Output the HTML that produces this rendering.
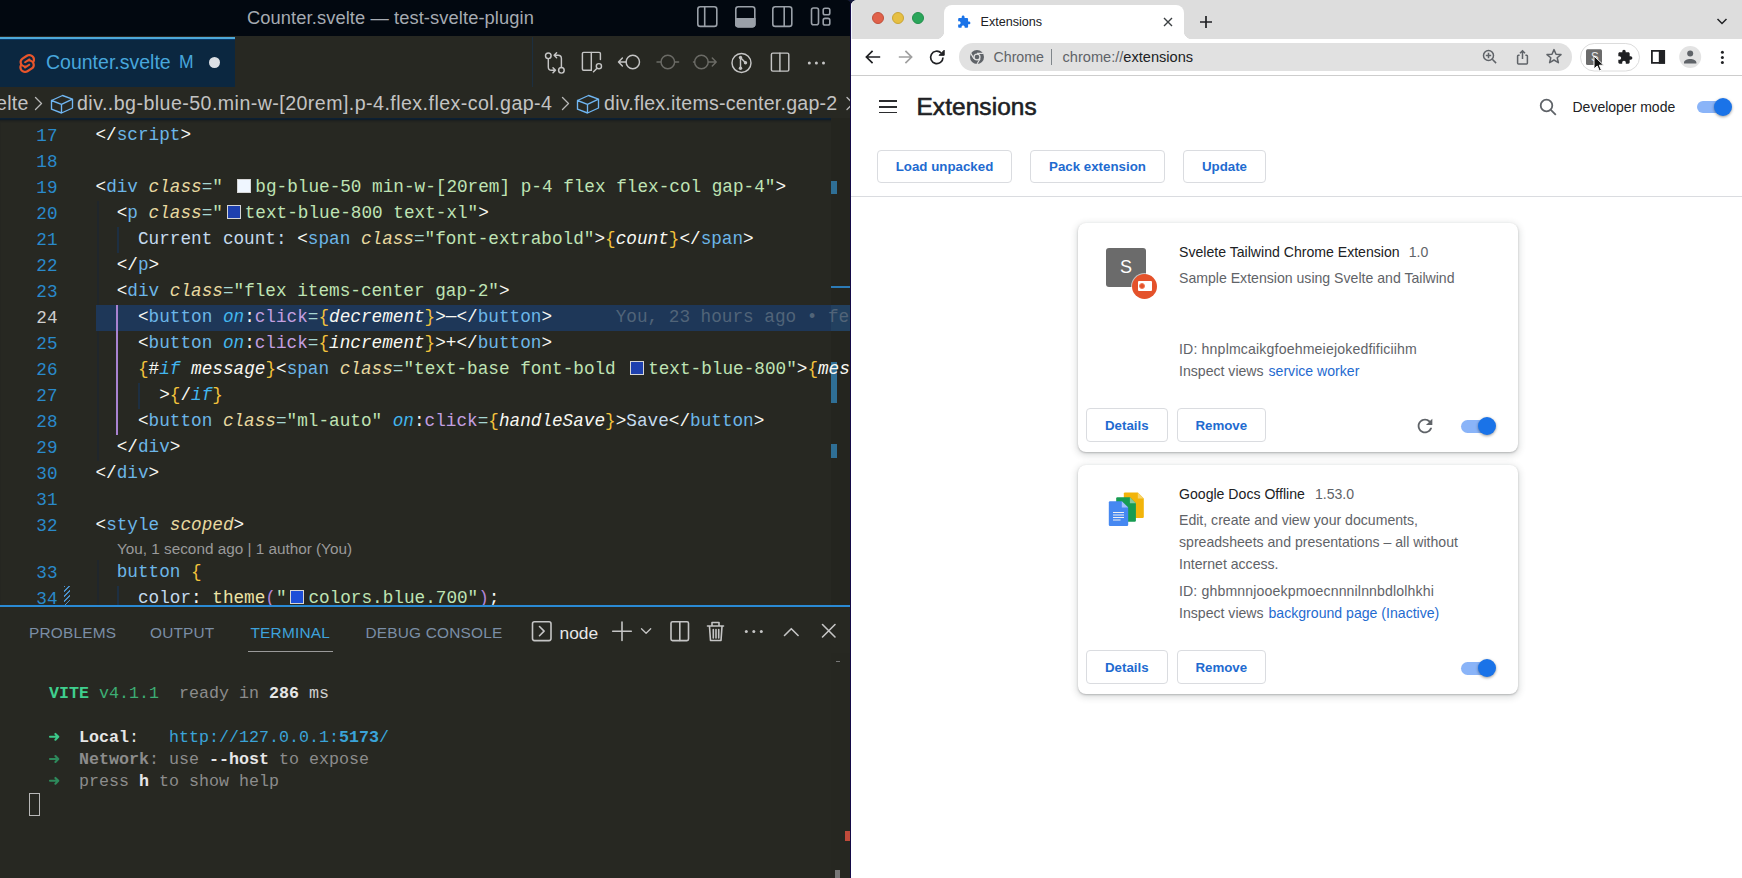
<!DOCTYPE html>
<html><head><meta charset="utf-8">
<style>
*{box-sizing:border-box}
html,body{margin:0;padding:0}
body{width:1742px;height:878px;overflow:hidden;position:relative;background:#141a3c;font-family:"Liberation Sans",sans-serif}
.abs{position:absolute}
#vs{position:absolute;left:0;top:0;width:851px;height:878px;background:#272822;overflow:hidden;border-top-right-radius:5px}
#title{position:absolute;left:0;top:0;width:851px;height:36px;background:#020810}
#title .t{position:absolute;left:247px;top:7px;font-size:18.3px;color:#a6abb2;white-space:nowrap;letter-spacing:0.1px}
#tabs{position:absolute;left:0;top:36px;width:851px;height:51px;background:#272822}
#tab{position:absolute;left:0;top:1px;width:235px;height:50px;background:#0b2740;border-top:2px solid #4ea8d8;box-shadow:inset 0 1px 0 #063868}
#crumbs{position:absolute;left:0;top:87px;width:851px;height:31px;background:#272822;overflow:hidden}
#editor{position:absolute;left:0;top:118px;width:851px;height:487px;background:#272822;overflow:hidden;box-shadow:inset 0 1.5px 0 #0b2035,inset 0 4px 3px -2px #0d141c}
#panel{position:absolute;left:0;top:605px;width:851px;height:273px;background:#272822;overflow:hidden}
.ptab{position:absolute;top:18.5px;font-size:15.4px;color:#7b8ea6;white-space:nowrap;letter-spacing:.2px}
.code{position:absolute;left:95.5px;font-family:"Liberation Mono",monospace;font-size:17.7px;line-height:26px;white-space:pre;color:#f8f8f2}
.ln{position:absolute;left:0;width:57.5px;font-family:"Liberation Mono",monospace;font-size:17.65px;line-height:26px;color:#2a8acb;text-align:right}
.ln.act{color:#d0d0d0}
.tg{color:#6cb6e8}.at{color:#e8d9a0;font-style:italic}.st{color:#bfe3b4}.eq{color:#a6d6d2}.br{color:#f2c23c}.it{font-style:italic;color:#f8f8f2}
.ob{color:#42b6ee;font-style:italic}.pu{color:#c39fe0}.tx{color:#c4daee}.pr{color:#b485d6}.fn{color:#ede3a6}
.bl{color:#516478}
.sw{display:inline-block;width:21.8px;height:14px;position:relative;vertical-align:-1px}
.sw i{position:absolute;left:3.8px;top:0;width:14px;height:14px;border:1px solid #d6d6d6}
.term{position:absolute;left:29px;font-family:"Liberation Mono",monospace;font-size:16.67px;line-height:22px;white-space:pre;color:#8c8c8c}
.b{font-weight:bold}
#chrome{position:absolute;left:851px;top:0;width:891px;height:878px;background:#fff;border-top-left-radius:6px;overflow:hidden}
.btn{position:absolute;height:33.5px;border:1px solid #dadce0;border-radius:4px;color:#1f6bd0;font-weight:bold;font-size:13.3px;text-align:center;line-height:31.5px;white-space:nowrap;background:#fff}
.card{position:absolute;left:226.5px;width:440px;background:#fff;border-radius:8px;box-shadow:0 1px 2px rgba(60,64,67,.3),0 2px 6px 2px rgba(60,64,67,.15)}
.ctx{position:absolute;left:328px;font-size:14.1px;color:#5f6368;white-space:nowrap;line-height:20px}
.tog{position:absolute;width:36px;height:14px}
.tog:before{content:"";position:absolute;left:0;top:0;width:34px;height:12.5px;border-radius:7px;background:#8ab4f8}
.tog:after{content:"";position:absolute;left:16.5px;top:-2.6px;width:18px;height:18px;border-radius:50%;background:#1a73e8;box-shadow:0 1px 3px rgba(0,0,0,.4)}
</style></head><body>
<div id="vs">
  <div class="abs" style="left:849.8px;top:0;width:1.2px;height:878px;background:#140a48;z-index:9"></div>
  <div id="title">
    <div class="t">Counter.svelte — test-svelte-plugin</div>
    <svg class="abs" style="left:690px;top:0" width="150" height="36" viewBox="0 0 150 36" fill="none" stroke="#9aa0a8" stroke-width="1.6">
      <rect x="7.8" y="6.8" width="19" height="19.6" rx="2.5"/><line x1="14.7" y1="7" x2="14.7" y2="26"/>
      <rect x="45.8" y="6.8" width="19" height="19.6" rx="2.5"/><path d="M45.8 18.8h19v5.6a2.5 2.5 0 0 1-2.5 2.5h-14a2.5 2.5 0 0 1-2.5-2.5z" fill="#9aa0a8"/>
      <rect x="82.8" y="6.8" width="19" height="19.6" rx="2.5"/><line x1="94.2" y1="7" x2="94.2" y2="26"/>
      <rect x="121.5" y="8" width="7" height="16.8" rx="2"/><rect x="133.2" y="8.2" width="6.6" height="6.6" rx="1.8"/><rect x="133.2" y="18.4" width="6.6" height="6.6" rx="1.8"/>
    </svg>
  </div>
  <div id="tabs">
    <div id="tab">
      <svg class="abs" style="left:18.8px;top:14.6px" width="16.4" height="19" viewBox="0 0 98.1 118">
        <path fill="#e8552b" d="M91.8 15.6C80.9-.1 59.2-4.7 43.6 5.2L16.1 22.8C8.6 27.5 3.4 35.2 1.9 43.9c-1.3 7.3-.2 14.8 3.3 21.3-2.4 3.6-4 7.6-4.7 11.8-1.6 8.9.5 18.1 5.7 25.4 11 15.7 32.6 20.3 48.2 10.4l27.5-17.5c7.5-4.7 12.7-12.4 14.2-21.1 1.3-7.3.2-14.8-3.3-21.3 2.4-3.6 4-7.6 4.7-11.8 1.7-9-.4-18.2-5.7-25.5z"/>
        <path fill="#0a2641" d="M40.9 103.9c-8.9 2.3-18.2-1.2-23.4-8.7-3.2-4.4-4.4-9.9-3.5-15.3.2-.9.4-1.7.6-2.6l.5-1.6 1.4 1c3.3 2.4 6.9 4.2 10.8 5.4l1 .3-.1 1c-.1 1.4.3 2.9 1.1 4.1 1.6 2.3 4.4 3.4 7.1 2.7.6-.2 1.2-.4 1.7-.7L65.5 72c1.4-.9 2.3-2.2 2.6-3.8.3-1.6-.1-3.3-1-4.6-1.6-2.3-4.4-3.3-7.1-2.6-.6.2-1.2.4-1.7.7l-10.5 6.7c-1.7 1.1-3.600 1.9-5.6 2.4-8.9 2.3-18.2-1.2-23.4-8.7-3.1-4.4-4.4-9.9-3.4-15.3.9-5.2 4.1-9.9 8.6-12.7l27.5-17.5c1.7-1.1 3.6-1.9 5.6-2.5 8.9-2.3 18.2 1.2 23.4 8.7 3.2 4.4 4.4 9.9 3.5 15.3-.2.9-.4 1.7-.7 2.6l-.5 1.6-1.4-1c-3.3-2.4-6.9-4.2-10.8-5.4l-1-.3.1-1c.1-1.4-.3-2.9-1.1-4.1-1.6-2.3-4.4-3.3-7.1-2.6-.6.2-1.2.4-1.7.7L32.4 46.1c-1.4.9-2.3 2.2-2.6 3.8s.1 3.3 1 4.6c1.6 2.3 4.4 3.3 7.1 2.6.6-.2 1.2-.4 1.7-.7l10.5-6.7c1.7-1.1 3.6-1.9 5.6-2.5 8.9-2.3 18.2 1.2 23.4 8.7 3.2 4.4 4.4 9.9 3.5 15.3-.9 5.2-4.1 9.9-8.6 12.7l-27.5 17.5c-1.7 1.1-3.6 1.9-5.6 2.5z"/>
      </svg>
      <div class="abs" style="left:46px;top:12px;font-size:19.5px;color:#47a6dc;white-space:nowrap">Counter.svelte</div>
      <div class="abs" style="left:179px;top:12px;font-size:19px;color:#47a6dc;transform:scaleX(.92);transform-origin:left">M</div>
      <div class="abs" style="left:208.5px;top:17.7px;width:11.7px;height:11.7px;border-radius:50%;background:#dcdfe4"></div>
    </div>
    <div class="abs" style="left:532px;top:1px;width:1px;height:50px;background:#1c2f40"></div>
    <svg class="abs" style="left:530px;top:-0.5px" width="321" height="51" viewBox="530 36 321 51" fill="none" stroke="#c5c5c5" stroke-width="1.45" stroke-linecap="round" stroke-linejoin="round">
      <!-- compare changes -->
      <circle cx="548.3" cy="55.8" r="2.8"/><path d="M548.3 58.6V67q0 3.3 3.3 3.3h3.9M553 67.8l2.5 2.5-2.5 2.5"/>
      <circle cx="561.4" cy="70.3" r="2.8"/><path d="M561.4 67.5V58.6q0-3.3-3.3-3.3h-4M556.6 52.8l-2.5 2.5 2.5 2.5"/>
      <!-- open changes -->
      <path d="M591.3 70.3h-7.7a1.2 1.2 0 0 1-1.2-1.2V53.6a1.2 1.2 0 0 1 1.2-1.2h15.6a1.2 1.2 0 0 1 1.2 1.2v5.9"/><line x1="591.3" y1="52.4" x2="591.3" y2="70.3"/>
      <circle cx="598.9" cy="66.2" r="2.6"/><line x1="597" y1="68.2" x2="593.5" y2="71.8"/>
      <!-- previous change -->
      <circle cx="632.8" cy="62" r="6.7"/><path d="M626.4 62h-7.8M622.4 58l-3.9 4 3.9 4"/>
      <!-- -O- dim -->
      <g stroke="#6b6b66"><circle cx="667.8" cy="62" r="6.8"/><path d="M657 62h4M674.6 62h4"/>
      <circle cx="701.4" cy="62" r="6.8"/><path d="M693.5 62h1.1M708.2 62h7.8M712.3 58l3.9 4-3.9 4"/></g>
      <!-- branch circle -->
      <circle cx="741.5" cy="62.9" r="9.5"/><g fill="#c5c5c5" stroke="none"><circle cx="740.5" cy="57.5" r="1.7"/><circle cx="740.5" cy="68.2" r="1.7"/><circle cx="745.5" cy="62.7" r="1.7"/></g><path d="M740.5 57.5v10.7M740.5 57.5l5 5.2"/>
      <!-- split -->
      <rect x="771.4" y="53.1" width="17.4" height="18" rx="1.4"/><line x1="779.9" y1="53.1" x2="779.9" y2="71.1"/>
      <!-- more -->
      <g fill="#c5c5c5" stroke="none"><circle cx="809.3" cy="62.9" r="1.5"/><circle cx="816.4" cy="62.9" r="1.5"/><circle cx="823.5" cy="62.9" r="1.5"/></g>
    </svg>
  </div>
  <div id="crumbs">
    <div class="abs" style="left:-4px;top:5px;font-size:19.6px;color:#c3c3c3;white-space:nowrap;letter-spacing:.3px">elte</div>
    <svg class="abs" style="left:0;top:0" width="851" height="31" viewBox="0 87 851 31" fill="none" stroke-linecap="round" stroke-linejoin="round">
      <path d="M35.5 97.5l6 6-6 6M562.5 97.5l6 6-6 6M847 97.5l6 6-6 6" stroke="#b8b8b8" stroke-width="1.3"/>
      <g stroke="#70b6f2" stroke-width="1.35">
        <path d="M51.5 100.5l11-5 10 3.6v8.9l-11 5-10-3.8z M51.5 100.5l10 3.8 11-5.2 M61.5 104.3v8.7"/>
        <path d="M577.5 100.5l11-5 10 3.6v8.9l-11 5-10-3.8z M577.5 100.5l10 3.8 11-5.2 M587.5 104.3v8.7"/>
      </g>
    </svg>
    <div class="abs" style="left:77px;top:5px;font-size:19.6px;color:#c3c3c3;white-space:nowrap;letter-spacing:0.45px">div..bg-blue-50.min-w-[20rem].p-4.flex.flex-col.gap-4</div>
    <div class="abs" style="left:604px;top:5px;font-size:19.6px;color:#c3c3c3;white-space:nowrap;letter-spacing:0.23px">div.flex.items-center.gap-2</div>
  </div>
  <div id="editor">
    <!-- guides -->
    <div class="abs" style="left:96.5px;top:83px;width:2px;height:260px;background:#20262b"></div><div class="abs" style="left:96.5px;top:442px;width:2px;height:45px;background:#20262b"></div>
    <div class="abs hl" style="left:96px;top:187px;width:755px;height:26px;background:#1e3758"></div>
    <div class="abs" style="left:116.5px;top:109px;width:2px;height:26px;background:#1d2f42"></div>
    <div class="abs" style="left:116.2px;top:187px;width:2px;height:130px;background:#a882d0"></div>
    <div class="abs" style="left:137.5px;top:265px;width:2px;height:26px;background:#1d2f42"></div>
    <div class="abs" style="left:116.5px;top:468px;width:2px;height:26px;background:#1d2f42"></div>
    <div class="abs" style="left:64px;top:468px;width:6px;height:19px;background:repeating-linear-gradient(135deg,#4a8fc8 0 1.2px,transparent 1.2px 3.4px)"></div>
    <!-- overview ruler -->
    <div class="abs" style="left:830.5px;top:0;width:1px;height:487px;background:#3b3c36"></div>
    <div class="abs" style="left:831px;top:0;width:20px;height:487px;background:#24251f"></div>
    <div class="abs" style="left:831px;top:63px;width:6px;height:13px;background:#2f6f95"></div>
    <div class="abs" style="left:831px;top:167.5px;width:20px;height:2px;background:#2c7bb6"></div>
    <div class="abs" style="left:831px;top:244px;width:6px;height:41px;background:#2f6f95"></div>
    <div class="abs" style="left:831px;top:326px;width:6px;height:14px;background:#2f6f95"></div>
    <div class="abs" style="left:831px;top:187px;width:20px;height:26px;background:#22405f"></div>
    <div class="abs codelens" style="left:117px;top:422px;font-size:15.3px;color:#9a9a9a;white-space:nowrap">You, 1 second ago | 1 author (You)</div>
    <div style="position:absolute;left:0;top:-118px;width:851px;height:878px">
<div class="ln" style="top:123px">17</div>
<div class="code" style="top:122px">&lt;/<span class="tg">script</span>></div>
<div class="ln" style="top:149px">18</div>
<div class="ln" style="top:175px">19</div>
<div class="code" style="top:174px">&lt;<span class="tg">div</span> <span class="at">class</span><span class="eq">=</span><span class="st">&quot; </span><span class="sw"><i style="background:#eff6ff"></i></span><span class="st">bg-blue-50 min-w-[20rem] p-4 flex flex-col gap-4&quot;</span>></div>
<div class="ln" style="top:201px">20</div>
<div class="code" style="top:200px">  &lt;<span class="tg">p</span> <span class="at">class</span><span class="eq">=</span><span class="st">&quot;</span><span class="sw"><i style="background:#1e40af"></i></span><span class="st">text-blue-800 text-xl&quot;</span>></div>
<div class="ln" style="top:227px">21</div>
<div class="code" style="top:226px">    <span class="tx">Current count: </span>&lt;<span class="tg">span</span> <span class="at">class</span><span class="eq">=</span><span class="st">&quot;font-extrabold&quot;</span>><span class="br">{</span><span class="it">count</span><span class="br">}</span>&lt;/<span class="tg">span</span>></div>
<div class="ln" style="top:253px">22</div>
<div class="code" style="top:252px">  &lt;/<span class="tg">p</span>></div>
<div class="ln" style="top:279px">23</div>
<div class="code" style="top:278px">  &lt;<span class="tg">div</span> <span class="at">class</span><span class="eq">=</span><span class="st">&quot;flex items-center gap-2&quot;</span>></div>
<div class="ln act" style="top:305px">24</div>
<div class="code" style="top:304px">    &lt;<span class="tg">button</span> <span class="ob">on</span>:<span class="pu">click</span><span class="eq">=</span><span class="br">{</span><span class="it">decrement</span><span class="br">}</span>>─&lt;/<span class="tg">button</span>>      <span class="bl">You, 23 hours ago • feat: add</span></div>
<div class="ln" style="top:331px">25</div>
<div class="code" style="top:330px">    &lt;<span class="tg">button</span> <span class="ob">on</span>:<span class="pu">click</span><span class="eq">=</span><span class="br">{</span><span class="it">increment</span><span class="br">}</span>>+&lt;/<span class="tg">button</span>></div>
<div class="ln" style="top:357px">26</div>
<div class="code" style="top:356px">    <span class="br">{</span>#<span class="ob">if</span> <span class="it">message</span><span class="br">}</span>&lt;<span class="tg">span</span> <span class="at">class</span><span class="eq">=</span><span class="st">&quot;text-base font-bold </span><span class="sw"><i style="background:#1e40af"></i></span><span class="st">text-blue-800&quot;</span>><span class="br">{</span><span class="it">message</span><span class="br">}</span></div>
<div class="ln" style="top:383px">27</div>
<div class="code" style="top:382px">      ><span class="br">{</span>/<span class="ob">if</span><span class="br">}</span></div>
<div class="ln" style="top:409px">28</div>
<div class="code" style="top:408px">    &lt;<span class="tg">button</span> <span class="at">class</span><span class="eq">=</span><span class="st">&quot;ml-auto&quot;</span> <span class="ob">on</span>:<span class="pu">click</span><span class="eq">=</span><span class="br">{</span><span class="it">handleSave</span><span class="br">}</span>><span class="tx">Save</span>&lt;/<span class="tg">button</span>></div>
<div class="ln" style="top:435px">29</div>
<div class="code" style="top:434px">  &lt;/<span class="tg">div</span>></div>
<div class="ln" style="top:461px">30</div>
<div class="code" style="top:460px">&lt;/<span class="tg">div</span>></div>
<div class="ln" style="top:487px">31</div>
<div class="ln" style="top:513px">32</div>
<div class="code" style="top:512px">&lt;<span class="tg">style</span> <span class="at">scoped</span>></div>
<div class="ln" style="top:560px">33</div>
<div class="code" style="top:559px">  <span class="tg">button</span> <span class="br">{</span></div>
<div class="ln" style="top:586px">34</div>
<div class="code" style="top:585px">    <span class="tx">color</span>: <span class="fn">theme</span><span class="pr">(</span><span class="st">&quot;</span><span class="sw"><i style="background:#1d4ed8"></i></span><span class="st">colors.blue.700&quot;</span><span class="pr">)</span>;</div>
    </div>
  </div>
  <div id="panel">
    <div class="abs" style="left:0;top:0;width:851px;height:2px;background:#2a8ad4"></div>
    <div class="ptab" style="left:29px">PROBLEMS</div>
    <div class="ptab" style="left:150px">OUTPUT</div>
    <div class="ptab" style="left:250.5px;color:#3ea2dc">TERMINAL</div>
    <div class="ptab" style="left:365.5px">DEBUG CONSOLE</div>
    <div class="abs" style="left:248px;top:46px;width:85px;height:1px;background:#9a9a9a"></div>
    <div class="abs" style="left:559.5px;top:18px;font-size:17.4px;color:#e6e6e6">node</div>
    <svg class="abs" style="left:520px;top:1px" width="331" height="50" viewBox="520 607 331 50" fill="none" stroke="#c5c5c5" stroke-width="1.6" stroke-linecap="round" stroke-linejoin="round">
      <rect x="532.5" y="622.8" width="18.5" height="18.8" rx="2"/><path d="M539.5 627.5l4.6 4.6-4.6 4.6"/>
      <path d="M622 623v18.5M612.7 632.2h18.6"/><path d="M641.5 629.8l4.6 4.5 4.6-4.5" stroke-width="1.3"/>
      <rect x="671" y="622.8" width="17.5" height="18.8" rx="1.5"/><line x1="679.8" y1="623" x2="679.8" y2="641.5"/>
      <path d="M707.5 627h16M712 626.5v-3h7v3M709.5 627.5l1 14h10.5l1-14M713.3 630.5v8.5M716 630.5v8.5M718.7 630.5v8.5"/>
      <g fill="#c5c5c5" stroke="none"><circle cx="746.3" cy="632.5" r="1.5"/><circle cx="753.8" cy="632.5" r="1.5"/><circle cx="761.3" cy="632.5" r="1.5"/></g>
      <path d="M784.5 636.5l6.8-6.8 6.8 6.8"/>
      <path d="M822.5 625.5l12.5 12.5M835 625.5l-12.5 12.5"/>
    </svg>
    <div class="abs" style="left:831px;top:48px;width:20px;height:223px;background:#262721"></div>
    <div class="abs" style="left:836px;top:55.5px;width:4px;height:1px;background:#777"></div>
    <div class="abs" style="left:845px;top:226px;width:5px;height:9.5px;background:#c04a3a"></div>
    <div class="abs" style="left:835px;top:265px;width:5px;height:8px;background:#777"></div>
    <div class="term" style="top:78px"><span style="color:#3fcf8e" class="b">  VITE</span> <span style="color:#3dae74">v4.1.1</span>  ready in <span class="b" style="color:#e6e6e6">286</span> <span style="color:#cfcfcf">ms</span></div>
    <div class="term" style="top:122px">     <span class="b" style="color:#e6e6e6">Local</span><span style="color:#e6e6e6">:</span>   <span style="color:#3aa3d8">http://127.0.0.1:<span class="b">5173</span>/</span></div>
    <div class="term" style="top:144px">     <span class="b">Network</span>: use <span class="b" style="color:#e6e6e6">--host</span> to expose</div>
    <div class="term" style="top:166px">     press <span class="b" style="color:#e6e6e6">h</span> to show help</div>
    <svg class="abs" style="left:40px;top:120px" width="30" height="70" viewBox="40 725 30 70" fill="none" stroke-width="2.1" stroke-linecap="round" stroke-linejoin="round">
      <path d="M50 736.8h8.2M55.4 733.9l2.9 2.9-2.9 2.9" stroke="#3cc98a"/>
      <path d="M50 759h8.2M55.4 756.1l2.9 2.9-2.9 2.9" stroke="#2e8a5c"/>
      <path d="M50 780.8h8.2M55.4 777.9l2.9 2.9-2.9 2.9" stroke="#2e8a5c"/>
    </svg>
    <div class="abs" style="left:29px;top:187.5px;width:10.5px;height:23px;border:1.5px solid #b8b8b8"></div>
  </div>
</div>
<div id="chrome">
  <div class="abs" style="left:0;top:0;width:1.2px;height:38.5px;background:#f2f6fd;z-index:5"></div>
  <div class="abs" style="left:0;top:0;width:891px;height:38.5px;background:#dddddd"></div>
  <div class="abs" style="left:21px;top:12px;width:12.2px;height:12.2px;border-radius:50%;background:#e0614a;border:.6px solid #c0503c"></div>
  <div class="abs" style="left:41.2px;top:12px;width:12.2px;height:12.2px;border-radius:50%;background:#e6bf42;border:.6px solid #c9a535"></div>
  <div class="abs" style="left:61px;top:12px;width:12.2px;height:12.2px;border-radius:50%;background:#2aa55a;border:.6px solid #21904c"></div>
  <!-- active tab -->
  <div class="abs" style="left:93px;top:5px;width:240px;height:34px;background:#fff;border-radius:8px 8px 0 0"></div>
  <div class="abs" style="left:85px;top:30.5px;width:8px;height:8px;background:radial-gradient(circle at 0 0,transparent 8px,#fff 8.5px)"></div>
  <div class="abs" style="left:333px;top:30.5px;width:8px;height:8px;background:radial-gradient(circle at 100% 0,transparent 8px,#fff 8.5px)"></div>
  <svg class="abs" style="left:106px;top:15px" width="14" height="14" viewBox="0 0 24 24"><path fill="#1a73e8" d="M20.5 11H19V7c0-1.1-.9-2-2-2h-4V3.5C13 2.12 11.88 1 10.5 1S8 2.12 8 3.5V5H4c-1.1 0-1.99.9-1.99 2v3.8H3.5c1.49 0 2.7 1.21 2.7 2.7s-1.21 2.7-2.7 2.7H2V20c0 1.1.9 2 2 2h3.8v-1.5c0-1.49 1.21-2.7 2.7-2.7 1.49 0 2.7 1.21 2.7 2.7V22H17c1.1 0 2-.9 2-2v-4h1.5c1.38 0 2.5-1.12 2.5-2.5S21.88 11 20.5 11z"/></svg>
  <div class="abs" style="left:129.5px;top:15px;font-size:12.6px;color:#202124;white-space:nowrap">Extensions</div>
  <svg class="abs" style="left:310px;top:15px" width="14" height="14" viewBox="0 0 14 14" stroke="#3c4043" stroke-width="1.4"><path d="M3 3l8 8M11 3l-8 8"/></svg>
  <svg class="abs" style="left:347px;top:14px" width="16" height="16" viewBox="0 0 16 16" stroke="#202124" stroke-width="1.7"><path d="M8 2v12M2 8h12"/></svg>
  <svg class="abs" style="left:864px;top:14px" width="14" height="14" viewBox="0 0 14 14" fill="none" stroke="#202124" stroke-width="1.5"><path d="M2.5 5l4.5 4.5 4.5-4.5"/></svg>
  <!-- toolbar -->
  <div class="abs" style="left:0;top:75px;width:891px;height:1px;background:#cdcdcd"></div>
  <svg class="abs" style="left:0;top:38px" width="120" height="38" viewBox="851 38 120 38" fill="none" stroke-width="1.7">
    <path d="M880.2 57h-13M872.6 50.8l-6.2 6.2 6.2 6.2" stroke="#202124"/>
    <path d="M898.8 57h13M905.4 50.8l6.2 6.2-6.2 6.2" stroke="#a0a0a0"/>
    <path d="M943 57.5a6.2 6.2 0 1 1-1.9-4.6" stroke="#202124"/><path d="M944.2 50.2v5.1h-5.1z" fill="#202124" stroke="#202124" stroke-width="1"/>
  </svg>
  <div class="abs" style="left:108.3px;top:43px;width:612.5px;height:28px;border-radius:14px;background:#e1e1e1"></div>
  <svg class="abs" style="left:118px;top:49px" width="16" height="16" viewBox="0 0 16 16"><circle cx="8" cy="8" r="7" fill="#5f6368"/><circle cx="8" cy="8" r="3.6" fill="#e1e1e1"/><circle cx="8" cy="8" r="2.3" fill="#5f6368"/><path d="M8 4.4h6.3M4.9 9.8L1.8 4.4M11.1 9.8L8 15" stroke="#e1e1e1" stroke-width="1.2"/></svg>
  <div class="abs" style="left:142.5px;top:49px;font-size:14.2px;color:#5f6368;white-space:nowrap">Chrome</div>
  <div class="abs" style="left:199.8px;top:49px;width:1px;height:16px;background:#80868b"></div>
  <div class="abs" style="left:211.5px;top:49px;font-size:14.6px;color:#5f6368;white-space:nowrap">chrome://<span style="color:#202124">extensions</span></div>
  <svg class="abs" style="left:620px;top:38px" width="271" height="38" viewBox="1471 38 271 38" fill="none" stroke-width="1.5">
    <circle cx="1488.5" cy="55.5" r="5" stroke="#5f6368"/><path d="M1492.3 59.3l3.8 3.8M1488.5 52.8v5.4M1485.8 55.5h5.4" stroke="#5f6368"/>
    <path d="M1519.6 55.3h-1.2a.8.8 0 0 0-.8.8v7a.8.8 0 0 0 .8.8h8.2a.8.8 0 0 0 .8-.8v-7a.8.8 0 0 0-.8-.8h-1.2M1522.5 50.8v8.2M1520 53.2l2.5-2.5 2.5 2.5" stroke="#5f6368"/>
    <path d="M1554 49.6l2 4.6 5 .4-3.8 3.2 1.2 4.9-4.4-2.7-4.4 2.7 1.2-4.9-3.8-3.2 5-.4z" stroke="#5f6368" stroke-linejoin="round"/>
    <rect x="1580.5" y="43.5" width="59" height="27.5" rx="13.75" stroke="#dcdcdc" stroke-width="1"/>
    <rect x="1586" y="49.3" width="16" height="15.6" rx="1.5" fill="#6b6b6b" stroke="none"/>
    <path d="M1651.9 50.8h12.3v12.1h-12.3z" stroke="#202124" stroke-width="1.8"/><path d="M1658.8 50h6.2v13.7h-6.2z" fill="#202124" stroke="none"/>
    <circle cx="1690.2" cy="57" r="11" fill="#e3e3e3" stroke="none"/>
    <circle cx="1690.2" cy="53.6" r="3" fill="#5f6368" stroke="none"/><path d="M1684 62.6c0-2.4 3.2-3.6 6.2-3.6s6.2 1.2 6.2 3.6v.8h-12.4z" fill="#5f6368" stroke="none"/>
    <g fill="#202124" stroke="none"><circle cx="1722.4" cy="52.3" r="1.5"/><circle cx="1722.4" cy="57.4" r="1.5"/><circle cx="1722.4" cy="62.5" r="1.5"/></g>
  </svg>
  <div class="abs" style="left:739.5px;top:48.5px;font-size:13.5px;color:#e6e6e6;transform:scaleX(.85);transform-origin:left">S</div>
  <svg class="abs" style="left:766px;top:49px" width="16" height="16" viewBox="0 0 24 24"><path fill="#202124" d="M20.5 11H19V7c0-1.1-.9-2-2-2h-4V3.5C13 2.12 11.88 1 10.5 1S8 2.12 8 3.5V5H4c-1.1 0-1.99.9-1.99 2v3.8H3.5c1.49 0 2.7 1.21 2.7 2.7s-1.21 2.7-2.7 2.7H2V20c0 1.1.9 2 2 2h3.8v-1.5c0-1.490 1.21-2.7 2.7-2.7 1.49 0 2.7 1.21 2.7 2.7V22H17c1.1 0 2-.9 2-2v-4h1.5c1.38 0 2.5-1.120 2.5-2.5S21.88 11 20.5 11z"/></svg>
  <svg class="abs" style="left:742px;top:55px" width="12" height="18" viewBox="0 0 12 18"><path d="M1 1v13l3.2-3 2.2 5 2-.9-2.1-4.9h4.4z" fill="#111" stroke="#fff" stroke-width="1"/></svg>
  <!-- page header -->
  <div class="abs" style="left:28px;top:100.3px;width:18px;height:1.6px;background:#2b2c2e"></div>
  <div class="abs" style="left:28px;top:106px;width:18px;height:1.6px;background:#2b2c2e"></div>
  <div class="abs" style="left:28px;top:111.9px;width:18px;height:1.6px;background:#2b2c2e"></div>
  <div class="abs" style="left:65.5px;top:92.7px;font-size:24.4px;color:#202124;white-space:nowrap;-webkit-text-stroke:.6px #202124;letter-spacing:.1px">Extensions</div>
  <svg class="abs" style="left:686px;top:96px" width="22" height="22" viewBox="0 0 22 22" fill="none" stroke="#5f6368" stroke-width="1.8"><circle cx="9.5" cy="9.5" r="5.8"/><path d="M13.8 13.8l5 5"/></svg>
  <div class="abs" style="left:721.5px;top:98.5px;font-size:14px;color:#202124;white-space:nowrap">Developer mode</div>
  <div class="tog" style="left:846px;top:100.5px"></div>
  <div class="btn" style="left:26px;top:149.5px;width:135px">Load unpacked</div>
  <div class="btn" style="left:179px;top:149.5px;width:135px">Pack extension</div>
  <div class="btn" style="left:332px;top:149.5px;width:83px">Update</div>
  <div class="abs" style="left:0;top:196px;width:891px;height:1px;background:#dadce0"></div>
  <!-- card 1 -->
  <div class="card" style="top:222.5px;height:229.5px"></div>
  <div class="abs" style="left:255px;top:248px;width:40px;height:39px;border-radius:3px;background:#6b6b6b;color:#fff;font-size:18px;text-align:center;line-height:38px">S</div>
  <div class="abs" style="left:280.5px;top:273.5px;width:25px;height:25px;border-radius:50%;background:#e4522b;box-shadow:0 0 0 1px rgba(255,255,255,.6)"></div>
  <div class="abs" style="left:286.8px;top:280.7px;width:14px;height:10.7px;border-radius:1px;background:#fff"></div>
  <div class="abs" style="left:287.8px;top:282.6px;width:6.4px;height:6.4px;border-radius:50%;background:#e4522b;border:1.4px solid #f07a55"></div>
  <div class="ctx" style="top:242px;color:#202124">Svelete Tailwind Chrome Extension<span style="color:#5f6368;margin-left:9px">1.0</span></div>
  <div class="ctx" style="top:268px">Sample Extension using Svelte and Tailwind</div>
  <div class="ctx" style="top:339px;letter-spacing:.17px">ID: hnplmcaikgfoehmeiejokedfificiihm</div>
  <div class="ctx" style="top:361px">Inspect views <span style="color:#1f6bd0;margin-left:1px">service worker</span></div>
  <div class="btn" style="left:234.8px;top:407.8px;width:82px;height:34.5px;line-height:33.5px">Details</div>
  <div class="btn" style="left:325.8px;top:407.8px;width:89px;height:34.5px;line-height:33.5px">Remove</div>
  <svg class="abs" style="left:563px;top:415px" width="22" height="22" viewBox="0 0 24 24"><path fill="#5f6368" d="M17.65 6.35A7.958 7.958 0 0 0 12 4c-4.42 0-7.99 3.58-7.99 8s3.57 8 7.99 8c3.73 0 6.84-2.55 7.73-6h-2.08A5.99 5.99 0 0 1 12 18c-3.31 0-6-2.69-6-6s2.69-6 6-6c1.66 0 3.14.69 4.22 1.78L13 11h7V4l-2.35 2.35z"/></svg>
  <div class="tog" style="left:610px;top:420px"></div>
  <!-- card 2 -->
  <div class="card" style="top:465px;height:228.5px"></div>
  <svg class="abs" style="left:256px;top:490px" width="40" height="38" viewBox="0 0 40 38">
    <path d="M18 2.4h12.8l6 6v18.4a1.2 1.2 0 0 1-1.2 1.2H18a1.2 1.2 0 0 1-1.2-1.2V3.6A1.2 1.2 0 0 1 18 2.4z" fill="#f2b40a"/>
    <path d="M30.8 2.4l6 6h-6z" fill="#f8d36a"/>
    <path d="M10.4 7.2h12.5l6 6v17.3a1.2 1.2 0 0 1-1.2 1.2H10.4a1.2 1.2 0 0 1-1.2-1.2V8.4a1.2 1.2 0 0 1 1.2-1.2z" fill="#179c52"/>
    <path d="M22.9 7.2l6 6h-6z" fill="#87c9a0"/>
    <path d="M3 11.2h11.8l6.4 6.4v17.2a1.2 1.2 0 0 1-1.2 1.2H3a1.2 1.2 0 0 1-1.2-1.2V12.4A1.2 1.2 0 0 1 3 11.2z" fill="#4688f1"/>
    <path d="M14.8 11.2l6.4 6.4h-6.4z" fill="#a1c2fa"/>
    <path d="M6 22.5h11M6 25h11M6 27.5h11M6 30h7.5" stroke="#f1f1f1" stroke-width="1.2"/>
  </svg>
  <div class="ctx" style="top:484px;color:#202124">Google Docs Offline<span style="color:#5f6368;margin-left:10px">1.53.0</span></div>
  <div class="ctx" style="top:509px;line-height:22px;width:330px">Edit, create and view your documents,<br>spreadsheets and presentations – all without<br>Internet access.</div>
  <div class="ctx" style="top:581px;letter-spacing:.14px">ID: ghbmnnjooekpmoecnnnilnnbdlolhkhi</div>
  <div class="ctx" style="top:603px">Inspect views <span style="color:#1f6bd0;margin-left:1px">background page (Inactive)</span></div>
  <div class="btn" style="left:234.8px;top:649.8px;width:82px;height:34.5px;line-height:33.5px">Details</div>
  <div class="btn" style="left:325.8px;top:649.8px;width:89px;height:34.5px;line-height:33.5px">Remove</div>
  <div class="tog" style="left:610px;top:662px"></div>
</div>

</body></html>
